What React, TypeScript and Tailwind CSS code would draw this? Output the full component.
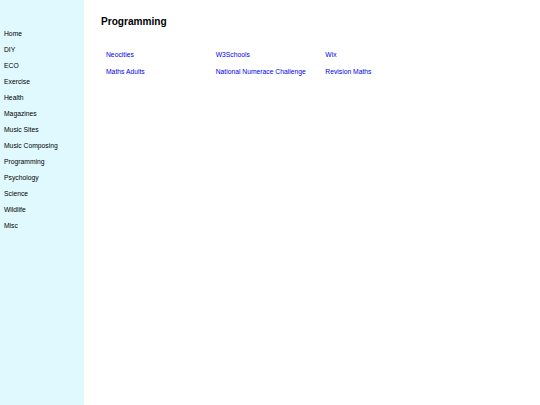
const nav = ['Home', 'DIY', 'ECO', 'Exercise', 'Health', 'Magazines', 'Music Sites', 'Music Composing', 'Programming', 'Psychology', 'Science', 'Wildlife', 'Misc']

const links = ['Neocities', 'W3Schools', 'Wix', 'Maths Adults', 'National Numerace Challenge', 'Revision Maths']

export default function App() {
  return (
    <div className="flex min-h-[405px] bg-white text-[6.75px] leading-none text-black" style={{ fontFamily: '"Liberation Sans", Arial, sans-serif' }}>
      <nav className="w-[84px] shrink-0 bg-[#e0f9ff] pt-[30px]">
        <ul className="flex flex-col">
          {nav.map((n) => (
            <li key={n} className="h-[16px] px-[4px]">
              <a href="#" className="block leading-[8px]">{n}</a>
            </li>
          ))}
        </ul>
      </nav>
      <main className="flex-1 pl-[17px] pt-[16px]">
        <h1 className="text-[10.1px] font-bold leading-[12px]">Programming</h1>
        <div className="mt-[23px] grid w-[334px] grid-cols-3 gap-y-[9px] pl-[5px]">
          {links.map((l) => (
            <a key={l} href="#" className="leading-[8px] text-[#0000ee]">{l}</a>
          ))}
        </div>
      </main>
    </div>
  )
}
